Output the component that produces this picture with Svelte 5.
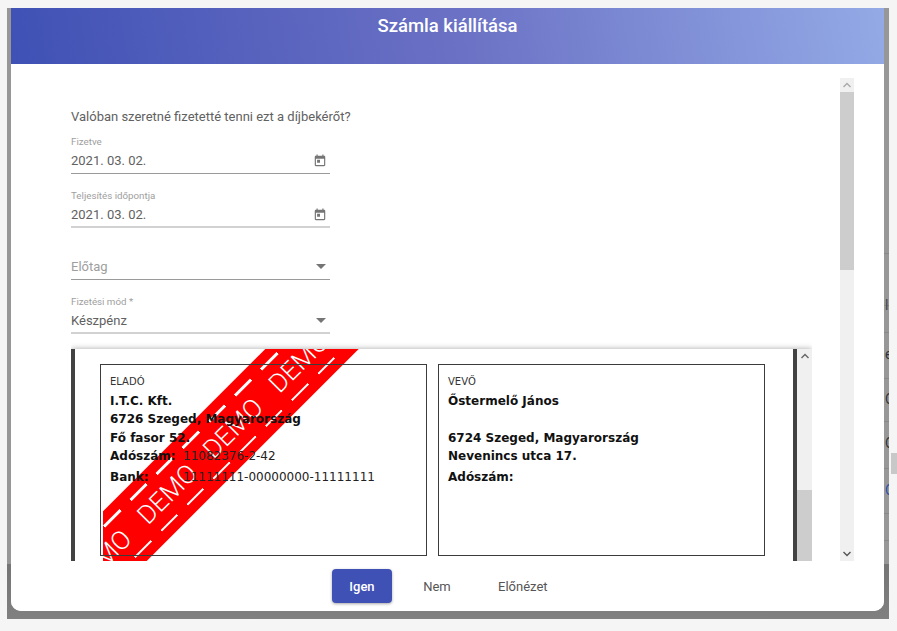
<script>
    // invoice demo dialog
    let fields = [
        { label: 'Fizetve', value: '2021. 03. 02.', soft: false },
        { label: 'Teljesítés időpontja', value: '2021. 03. 02.', soft: true }
    ];
    let rowLines = [245, 297, 324, 370, 413, 460, 505, 532];
    let rowTexts = [
        { y: 289, t: 'le', c: '#444' },
        { y: 338, t: 'e', c: '#333' },
        { y: 383, t: 'C', c: '#333' },
        { y: 427, t: 'C', c: '#333' },
        { y: 474, t: 'C', c: '#2a4fa8' }
    ];
    let demoWords = Array(10).fill('DEMO');
</script>

<div class="page">
    <div class="backdrop">
        {#each rowLines as y}
            <div class="row-line" style="top: {y}px"></div>
        {/each}
        {#each rowTexts as r}
            <div class="row-text" style="top: {r.y}px; color: {r.c}">{r.t}</div>
        {/each}
        <div class="page-scroll"></div>
        <div class="dialog">
            <header>Számla kiállítása</header>
            <div class="content">
                <div class="form">
                    <p class="question">Valóban szeretné fizetetté tenni ezt a díjbekérőt?</p>
                    {#each fields as f}
                        <div class="field">
                            <span class="label">{f.label}</span>
                            <div class="input" class:soft={f.soft}>
                                <span>{f.value}</span>
                                <svg width="14" height="14" viewBox="0 0 24 24"><path fill="#757575" d="M19 3h-1V1h-2v2H8V1H6v2H5c-1.1 0-2 .9-2 2v14c0 1.1.9 2 2 2h14c1.1 0 2-.9 2-2V5c0-1.1-.9-2-2-2zm0 16H5V8h14v11zM7 10h5v5H7z"/></svg>
                            </div>
                        </div>
                    {/each}
                    <div class="field select empty">
                        <div class="input">
                            <span>Előtag</span>
                            <i class="caret"></i>
                        </div>
                    </div>
                    <div class="field select">
                        <span class="label">Fizetési mód *</span>
                        <div class="input soft">
                            <span>Készpénz</span>
                            <i class="caret"></i>
                        </div>
                    </div>
                </div>
                <div class="preview">
                    <div class="sheet">
                        <div class="stamp-clip">
                            <div class="stamp">
                                <div class="dash"></div>
                                <div class="words">
                                    {#each demoWords as w}<span>{w}</span>{/each}
                                </div>
                                <div class="dash"></div>
                            </div>
                        </div>
                        <div class="parties">
                            <div class="party">
                                <h6>ELADÓ</h6>
                                <div class="name">I.T.C. Kft.</div>
                                <div class="name">6726 Szeged, Magyarország</div>
                                <div class="name">Fő fasor 52.</div>
                                <div class="pair"><b>Adószám:</b><span>11082376-2-42</span></div>
                                <div class="pair bank"><b>Bank:</b><span>11111111-00000000-11111111</span></div>
                            </div>
                            <div class="party">
                                <h6>VEVŐ</h6>
                                <div class="name">Őstermelő János</div>
                                <div class="name">&nbsp;</div>
                                <div class="name">6724 Szeged, Magyarország</div>
                                <div class="name">Nevenincs utca 17.</div>
                                <div class="pair bank"><b>Adószám:</b></div>
                            </div>
                        </div>
                    </div>
                    <div class="inner-scroll">
                        <svg class="up" width="10" height="6" viewBox="0 0 10 6"><path d="M1.5 5 5 1.5 8.5 5" fill="none" stroke="#666" stroke-width="1.4"/></svg>
                        <div class="inner-thumb"></div>
                    </div>
                </div>
                <div class="outer-scroll">
                    <svg class="up" width="10" height="6" viewBox="0 0 10 6"><path d="M1.5 5 5 1.5 8.5 5" fill="none" stroke="#aaa" stroke-width="1.4"/></svg>
                    <div class="outer-thumb"></div>
                    <svg class="down" width="10" height="6" viewBox="0 0 10 6"><path d="M1.5 1 5 4.5 8.5 1" fill="none" stroke="#555" stroke-width="1.4"/></svg>
                </div>
            </div>
            <footer>
                <button class="primary">Igen</button>
                <button>Nem</button>
                <button>Előnézet</button>
            </footer>
        </div>
    </div>
</div>

<style>
    :global(body) {
        margin: 0;
        background: #f5f5f5;
        overflow: hidden;
    }
    .page {
        width: 897px;
        height: 631px;
        padding: 8px 8px 12px 7px;
        box-sizing: border-box;
        font-family: Roboto, sans-serif;
    }
    .backdrop {
        position: relative;
        width: 882px;
        height: 611px;
        background: linear-gradient(#979797 0, #979797 91%, #757575 91%, #808080 100%);
        padding-left: 4px;
        box-sizing: border-box;
    }
    .row-line {
        position: absolute;
        right: 0;
        width: 6px;
        height: 1px;
        background: #888;
    }
    .row-text {
        position: absolute;
        left: 878px;
        width: 4px;
        overflow: hidden;
        font-size: 14px;
    }
    .page-scroll {
        position: absolute;
        left: 884px;
        top: 445px;
        width: 6px;
        height: 21px;
        background: #c8c8c8;
    }
    .dialog {
        position: relative;
        width: 873px;
        height: 603px;
        background: #fff;
        border-radius: 0 0 10px 10px;
        display: flex;
        flex-direction: column;
        overflow: hidden;
    }
    header {
        height: 56px;
        flex: none;
        background: linear-gradient(80deg, #3f51b5 0%, #6a70c4 50%, #93aae6 100%);
        color: #fff;
        font-size: 18.5px;
        font-weight: 500;
        text-align: center;
        line-height: 36px;
    }
    .content {
        position: relative;
        flex: 1;
        min-height: 0;
        padding: 0 29px 0 60px;
        display: flex;
        flex-direction: column;
    }
    .form {
        width: 259px;
        height: 285px;
        flex: none;
        padding-top: 45px;
        box-sizing: border-box;
    }
    .question {
        margin: 0;
        font-size: 13px;
        line-height: 16px;
        color: #616161;
        white-space: nowrap;
    }
    .field {
        margin-top: 11px;
    }
    .field + .field {
        margin-top: 16px;
    }
    .label {
        display: block;
        font-size: 9.75px;
        line-height: 12px;
        color: #9e9e9e;
    }
    .input {
        display: flex;
        justify-content: space-between;
        align-items: center;
        height: 25px;
        margin-top: 1px;
        box-sizing: border-box;
        border-bottom: 1px solid #9a9a9a;
        font-size: 13px;
        color: #616161;
        padding: 0 3px 2px 0;
    }
    .input.soft {
        border-bottom: 2px solid #d2d2d2;
        padding-bottom: 1px;
    }
    .input svg {
        flex: none;
        margin-top: 2px;
    }
    .field.empty {
        margin-top: 27px;
    }
    .field.empty + .field {
        margin-top: 16px;
    }
    .empty .input {
        margin-top: 0;
        color: #9e9e9e;
    }
    .select .input {
        padding-right: 4px;
    }
    .caret {
        width: 0;
        height: 0;
        border-left: 5px solid transparent;
        border-right: 5px solid transparent;
        border-top: 5px solid #757575;
    }
    .preview {
        position: relative;
        display: flex;
        box-shadow: 0 0 6px rgba(0, 0, 0, 0.35);
        clip-path: inset(-8px 0 0 0);
        width: 741px;
        height: 212px;
        flex: none;
    }
    .sheet {
        position: relative;
        width: 726px;
        height: 212px;
        flex: none;
        box-sizing: border-box;
        background: #fff;
        border-left: 4px solid #424242;
        border-right: 4px solid #424242;
        overflow: hidden;
    }
    .parties {
        position: relative;
        display: flex;
        gap: 11px;
        padding: 15px 0 0 25px;
    }
    .party {
        width: 327px;
        height: 192px;
        flex: none;
        box-sizing: border-box;
        border: 1.5px solid #3c3c3c;
        padding: 10px 9px;
        font-family: "DejaVu Sans", sans-serif;
    }
    h6 {
        margin: 0 0 4px;
        font-size: 10px;
        font-weight: 400;
        line-height: 13px;
        color: #333;
    }
    .name {
        font-size: 12px;
        font-weight: 700;
        line-height: 18.3px;
        color: #111;
    }
    .pair {
        display: flex;
        font-size: 12px;
        line-height: 18px;
        color: #222;
    }
    .pair b {
        width: 73px;
        flex: none;
        color: #111;
    }
    .bank {
        margin-top: 3px;
    }
    .stamp-clip {
        position: absolute;
        left: 28px;
        top: 0;
        width: 600px;
        height: 212px;
        overflow: hidden;
    }
    .stamp {
        position: absolute;
        left: -313px;
        top: 78.5px;
        width: 820px;
        height: 66px;
        background: #f00;
        transform: rotate(-45deg);
        display: flex;
        flex-direction: column;
        justify-content: space-between;
        padding: 10px 0;
        box-sizing: border-box;
    }
    .dash {
        height: 2.5px;
        background: repeating-linear-gradient(90deg, #fff 0 23px, transparent 23px 37px);
    }
    .words {
        display: flex;
        gap: 21px;
        justify-content: center;
        color: #fff;
        font-size: 26px;
        font-weight: 300;
        line-height: 24px;
        white-space: nowrap;
        font-family: Roboto, sans-serif;
    }
    .inner-scroll {
        position: relative;
        width: 15px;
        height: 212px;
        background: #f0f0f0;
        flex: none;
    }
    .inner-scroll .up {
        position: absolute;
        left: 3px;
        top: 4px;
    }
    .inner-thumb {
        position: absolute;
        left: 0;
        bottom: 0;
        width: 15px;
        height: 71px;
        background: #cdcdcd;
    }
    .outer-scroll {
        position: absolute;
        left: 829px;
        top: 14px;
        width: 14px;
        height: 483px;
        background: #f0f0f0;
    }
    .outer-scroll .up {
        position: absolute;
        left: 2px;
        top: 4px;
    }
    .outer-scroll .down {
        position: absolute;
        left: 2px;
        bottom: 4px;
    }
    .outer-thumb {
        position: absolute;
        left: 0;
        top: 14px;
        width: 14px;
        height: 178px;
        background: #cdcdcd;
    }
    footer {
        height: 50px;
        flex: none;
        display: flex;
        align-items: center;
        padding-left: 321px;
        background: #fff;
        position: relative;
    }
    button {
        height: 34px;
        min-width: 60px;
        margin-right: 15px;
        padding: 0 16px;
        background: transparent;
        border: 0;
        border-radius: 4px;
        font-family: Roboto, sans-serif;
        font-size: 13px;
        font-weight: 400;
        color: #555;
    }
    .primary {
        background: #3f51b5;
        color: #fff;
        font-weight: 500;
        box-shadow: 0 1px 3px rgba(0, 0, 0, 0.35);
    }
</style>
